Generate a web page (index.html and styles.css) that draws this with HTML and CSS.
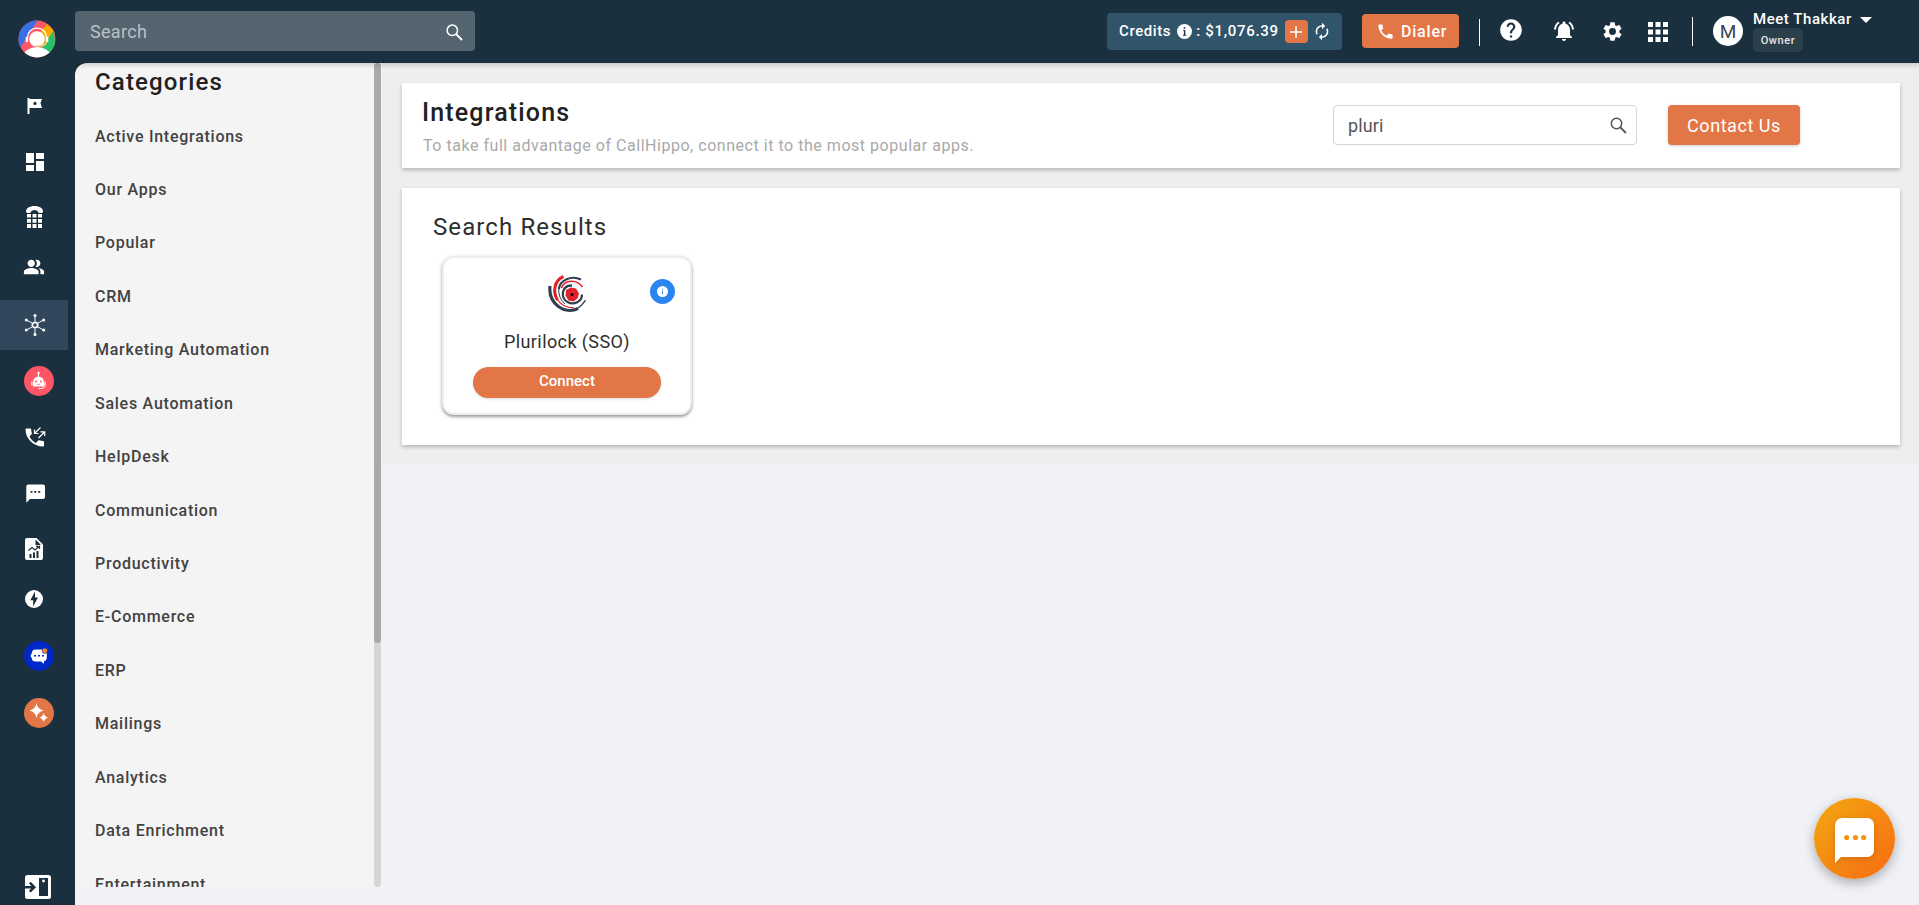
FILE: index.html
```
<!DOCTYPE html>
<html lang="en">
<head>
<meta charset="utf-8">
<title>Integrations</title>
<link rel="stylesheet" href="styles.css">
</head>
<body>
<div class="app">
  <aside class="sidebar">
    <div class="brand">
      <svg width="38" height="38" viewBox="0 0 38 38">
        <defs><clipPath id="disc"><circle cx="19" cy="19" r="18.5"/></clipPath></defs>
        <g clip-path="url(#disc)">
          <rect width="38" height="38" fill="#ff5869"/>
          <path d="M0 0H20L2 28H0Z" fill="#3a6fe8"/>
          <path d="M29 4L38 13L25 29L18 17Z" fill="#ffab00"/>
          <path d="M36 10L22 30L30 38H38Z" fill="#23c36c"/>
          <ellipse cx="19" cy="36.500" rx="13.500" ry="9.500" fill="#fff"/>
          <circle cx="19" cy="19" r="7.800" fill="#fff"/>
          <path d="M9.500 20V17a9.500 8.800 0 0 1 19 0v3" fill="none" stroke="#fff" stroke-width="1.300"/>
          <path d="M8.800 17v5M29.200 17v5" stroke="#fff" stroke-width="2.200"/>
          <path d="M28.500 22q-1 4-7 4h-4" fill="none" stroke="#ffc46b" stroke-width="1.500"/>
        </g>
      </svg>
    </div>
    <nav class="nav">
      <a class="nav-item h46"><svg width="16" height="16" viewBox="0 0 16 16"><path fill="#fff" fill-rule="evenodd" d="M.5 0h2v1H15l-1.500 4L15 10H2.500v6h-2zM8 3.800a1.600 1.600 0 1 0 0 3.200 1.600 1.600 0 0 0 0-3.200z"/></svg></a>
      <a class="nav-item h66"><svg width="24" height="24" viewBox="0 0 24 24"><path fill="#fff" d="M3 13h8V3H3zm0 8h8v-6H3zm10 0h8V11h-8zm0-18v6h8V3z"/></svg></a>
      <a class="nav-item h44 left"><svg width="17" height="22" viewBox="0 0 17 22"><path fill="#fff" d="M8.500 0C3.500 0 0 2.300 0 5.200c0 1.200 1 1.900 2 1.900h2c.800 0 .800-3 4.500-3s3.700 3 4.500 3h2c1 0 2-.700 2-1.900C17 2.300 13.500 0 8.500 0zM1 8h4v3.500H1zm5.500 0h4v3.500h-4zM12 8h4v3.500h-4zM1 13h4v3.700H1zm5.500 0h4v3.700h-4zm5.500 0h4v3.700h-4zM1 18h4v4H1zm5.500 0h4v4h-4zm5.500 0h4v4h-4z"/></svg></a>
      <a class="nav-item h56 left"><svg width="22" height="22" viewBox="0 0 24 24"><path fill="#fff" d="M16.670 13.130C18.040 14.060 19 15.320 19 17v3h4v-3c0-2.180-3.570-3.470-6.330-3.870zM15 12c2.210 0 4-1.790 4-4s-1.790-4-4-4c-.470 0-.910.100-1.330.240a5.980 5.980 0 0 1 0 7.520c.420.140.860.240 1.330.240zM9 12c2.210 0 4-1.790 4-4s-1.790-4-4-4-4 1.790-4 4 1.790 4 4 4zm0 1c-2.670 0-8 1.340-8 4v3h16v-3c0-2.660-5.330-4-8-4z"/></svg></a>
      <a class="nav-item h50 active"><svg width="22" height="22" viewBox="0 0 22 22"><g stroke="#fff" stroke-width="1" fill="none"><path d="M11 1.500v6M11 14.500v6M2.500 6l5.500 3M14 13l5.500 3M2.500 16L8 13M14 9l5.500-3"/><circle cx="11" cy="11" r="2.700" stroke-width="1.700"/></g><g fill="#fff"><circle cx="11" cy="1.600" r="1.500"/><circle cx="11" cy="20.400" r="1.500"/><circle cx="2.300" cy="6" r="1.500"/><circle cx="19.700" cy="6" r="1.500"/><circle cx="2.300" cy="16" r="1.500"/><circle cx="19.700" cy="16" r="1.500"/></g></svg></a>
      <a class="nav-item h62 round"><svg width="30" height="30" viewBox="0 0 30 30"><circle cx="15" cy="15" r="15" fill="#ff5665"/><circle cx="14.500" cy="7" r="1.200" fill="#fff"/><path d="M14.500 7v4" stroke="#fff"/><path d="M9 17q0-6.500 5.500-6.500T20 17v3.500H9zM7.300 15.500h1.200v4H7.300zM20.500 15.500h1.200v4h-1.200z" fill="#fff"/><circle cx="12" cy="15.500" r="1" fill="#ff5665"/><circle cx="17" cy="15.500" r="1" fill="#ff5665"/><path d="M13 18q1.500 1 3 0" stroke="#ff5665" stroke-width=".8" fill="none"/><path d="M21 19.500q0 3-4.500 3h-2" stroke="#fff" fill="none"/></svg></a>
      <a class="nav-item h50"><svg width="21" height="20" viewBox="0 0 21 20"><path fill="#fff" d="M4.500 9.500c1.600 3.100 3.300 4.800 6.400 6.400l2.400-2.400c.300-.300.700-.400 1.100-.2 1.200.4 2.400.6 3.600.6.600 0 1 .4 1 1V18.500c0 .600-.400 1-1 1C8.500 19.500.500 11.500.500 2.500c0-.6.400-1 1-1H5.200c.600 0 1 .4 1 1 0 1.200.2 2.500.6 3.600.1.400 0 .800-.2 1.100z"/><path d="M15.500.500L9.500 6.500M9.500 2.500v4h4M13.500 11l6-6M15.500 4.800h4.200v4.200" fill="none" stroke="#fff" stroke-width="1.200"/></svg></a>
      <a class="nav-item h62"><svg width="19" height="19" viewBox="0 0 19 19"><path fill="#fff" fill-rule="evenodd" d="M2 .5h15a2 2 0 0 1 2 2V13a2 2 0 0 1-2 2H4L.3 18.800V2.500A2 2 0 0 1 2 .5zM4.500 7v1.800h2V7zm3.800 0v1.800h2V7zm3.900 0v1.800h2V7z"/></svg></a>
      <a class="nav-item h50 left"><svg width="18" height="22" viewBox="0 0 18 22"><path fill="#fff" d="M2 0h9.500L18 6.500V20a2 2 0 0 1-2 2H2a2 2 0 0 1-2-2V2a2 2 0 0 1 2-2z"/><path fill="#1b303e" d="M10.500 1.500V7H16zM4.500 16h2v4h-2zM8 14.500h2V20H8zM11.500 13h2v7h-2z"/><path d="M3.500 12.500L7 9.500l3 2.500 4-3.500M11 8.300h3.500V11" fill="none" stroke="#1b303e" stroke-width="1.200"/></svg></a>
      <a class="nav-item h50 left"><svg width="18" height="18" viewBox="0 0 18 18"><circle cx="9" cy="9" r="9" fill="#fff"/><path d="M10 1.500v6h3L8.200 16.500v-6.300H5.300z" fill="#1b303e"/></svg></a>
      <a class="nav-item h64 round"><svg width="30" height="30" viewBox="0 0 30 30"><circle cx="15" cy="15" r="15" fill="#0028c9"/><path d="M11.500 8.500h7q4 0 4.300 4v4q0 3.200-2.800 3.800l-.2 2.500-2.800-2.300h-5.500q-3.500 0-3.700-3.300L6.500 15l1.200-2.500q.3-4 3.800-4z" fill="#fff"/><path d="M10 14h2v1.600h-2zM14 14h2v1.600h-2zM18 14h2v1.600h-2z" fill="#0028c9"/><circle cx="20.800" cy="9.800" r="2.700" fill="#f68b1f" stroke="#0028c9" stroke-width=".6"/></svg></a>
      <a class="nav-item h50 round"><svg width="30" height="30" viewBox="0 0 30 30"><circle cx="15" cy="15" r="15" fill="#e37646"/><path d="M12.500 5q1 6.200 7 7.500-6 1.300-7 7.500-1-6.200-7-7.500 6-1.300 7-7.500zM19.700 15q.7 3.900 4.400 4.700-3.700.8-4.400 4.600-.7-3.800-4.400-4.600 3.700-.8 4.400-4.700z" fill="#fff"/></svg></a>
    </nav>
    <div class="collapse">
      <svg width="26" height="24" viewBox="0 0 26 24"><rect width="26" height="24" rx="2.500" fill="#fff"/><rect x="14" y="3" width="9" height="18" fill="#1b303e"/><circle cx="18.500" cy="6" r="1.400" fill="#fff"/><path d="M0 12.200h8.500M4.800 7.700l4.500 4.500-4.500 4.500" fill="none" stroke="#1b303e" stroke-width="2.500"/></svg>
    </div>
  </aside>

  <div class="page">
    <header class="topbar">
      <div class="search"><span>Search</span>
        <svg width="17" height="17" viewBox="0 0 17 17"><circle cx="6.300" cy="6.300" r="5.200" fill="none" stroke="#fff" stroke-width="1.500"/><path d="M10 10l6 6" stroke="#fff" stroke-width="1.800"/></svg>
      </div>
      <div class="credits">
        <span>Credits</span>
        <svg class="info" width="15" height="15" viewBox="0 0 15 15"><circle cx="7.500" cy="7.500" r="7.500" fill="#fff"/><path d="M6.300 6h2v4.700h1v1H5.900v-1h1V7h-.6zM6.700 3.200h1.600v1.600H6.700z" fill="#1b303e"/></svg>
        <span class="amount">: $1,076.39</span>
        <span class="plus"><svg width="12" height="12" viewBox="0 0 12 12"><path d="M6 0v12M0 6h12" stroke="#fff" stroke-width="1.500"/></svg></span>
        <svg class="sync" width="16" height="19" viewBox="3 0 18 24"><path fill="#fff" d="M12 6v3l4-4-4-4v3c-4.420 0-8 3.580-8 8 0 1.570.460 3.030 1.240 4.260L6.700 14.800A5.870 5.870 0 0 1 6 12c0-3.310 2.690-6 6-6zm6.760 1.740L17.300 9.200c.440.840.700 1.790.700 2.800 0 3.310-2.690 6-6 6v-3l-4 4 4 4v-3c4.420 0 8-3.580 8-8 0-1.570-.460-3.030-1.240-4.260z"/></svg>
      </div>
      <div class="dialer">
        <svg width="19" height="19" viewBox="0 0 24 24"><path fill="#fff" d="M6.620 10.790c1.440 2.830 3.760 5.140 6.590 6.590l2.200-2.200c.270-.270.670-.360 1.020-.240 1.120.370 2.330.570 3.570.570.550 0 1 .450 1 1V20c0 .550-.450 1-1 1-9.390 0-17-7.610-17-17 0-.550.450-1 1-1h3.500c.550 0 1 .450 1 1 0 1.250.200 2.450.570 3.570.110.350.030.740-.250 1.020z"/></svg>
        <span>Dialer</span>
      </div>
      <i class="rule first"></i>
      <svg class="help" width="26" height="26" viewBox="0 0 24 24"><path fill="#fff" d="M12 2C6.480 2 2 6.480 2 12s4.480 10 10 10 10-4.480 10-10S17.520 2 12 2zm1 17h-2v-2h2zm2.070-7.750l-.900.920C13.450 12.900 13 13.500 13 15h-2v-.500c0-1.100.450-2.100 1.170-2.830l1.240-1.260c.370-.360.590-.860.590-1.410 0-1.100-.900-2-2-2s-2 .900-2 2H8c0-2.210 1.790-4 4-4s4 1.790 4 4c0 .880-.360 1.680-.930 2.250z"/></svg>
      <svg class="bell" width="24" height="24" viewBox="0 0 24 24"><path fill="#fff" d="M7.580 4.080L6.150 2.650C3.750 4.480 2.170 7.300 2.030 10.500h2a8.445 8.445 0 0 1 3.550-6.420zM19.970 10.500h2c-.150-3.200-1.730-6.020-4.120-7.850l-1.420 1.430a8.495 8.495 0 0 1 3.540 6.420zM18 11c0-3.070-1.640-5.640-4.500-6.320V4c0-.830-.670-1.500-1.500-1.500s-1.500.670-1.500 1.500v.680C7.630 5.360 6 7.920 6 11v5l-2 2v1h16v-1l-2-2zm-6 11c.140 0 .270-.010.400-.040a2.030 2.030 0 0 0 1.440-1.180c.100-.240.150-.500.150-.780h-4c.010 1.100.900 2 2.010 2z"/></svg>
      <svg class="gear" width="23" height="23" viewBox="0 0 24 24"><path fill="#fff" d="M19.140 12.940c.040-.300.060-.610.060-.940 0-.320-.020-.640-.070-.940l2.030-1.580a.490.490 0 0 0 .120-.610l-1.920-3.320a.488.488 0 0 0-.590-.220l-2.390.960c-.500-.380-1.030-.700-1.620-.940l-.360-2.540a.484.484 0 0 0-.480-.410h-3.840c-.240 0-.430.170-.470.410l-.360 2.540c-.590.240-1.130.570-1.620.940l-2.390-.960c-.220-.080-.470 0-.590.220L2.740 8.870c-.120.210-.080.470.120.610l2.030 1.580c-.050.300-.090.630-.090.940s.020.640.070.940l-2.030 1.580a.490.490 0 0 0-.120.610l1.920 3.320c.120.220.370.290.590.220l2.390-.960c.500.380 1.030.700 1.620.940l.360 2.540c.050.240.240.410.480.410h3.840c.240 0 .440-.170.470-.410l.360-2.540c.590-.240 1.130-.560 1.620-.940l2.390.960c.220.080.470 0 .590-.220l1.920-3.320c.120-.220.070-.470-.120-.610zM12 15.600A3.600 3.600 0 1 1 12 8.400a3.600 3.600 0 0 1 0 7.200z"/></svg>
      <svg class="apps" width="20" height="20" viewBox="0 0 20 20"><path fill="#fff" d="M0 0h5v5H0zM7.500 0h5v5h-5zM15 0h5v5h-5zM0 7.500h5v5H0zM7.500 7.500h5v5h-5zM15 7.500h5v5h-5zM0 15h5v5H0zM7.500 15h5v5h-5zM15 15h5v5h-5z"/></svg>
      <i class="rule second"></i>
      <div class="avatar">M</div>
      <div class="user">
        <div class="name"><span>Meet Thakkar</span><i class="caret"></i></div>
        <div class="role">Owner</div>
      </div>
    </header>

    <div class="body">
      <section class="categories">
        <div class="list">
          <h2>Categories</h2>
          <ul>
            <li>Active Integrations</li><li>Our Apps</li><li>Popular</li><li>CRM</li>
            <li>Marketing Automation</li><li>Sales Automation</li><li>HelpDesk</li>
            <li>Communication</li><li>Productivity</li><li>E-Commerce</li><li>ERP</li>
            <li>Mailings</li><li>Analytics</li><li>Data Enrichment</li><li>Entertainment</li>
          </ul>
        </div>
        <div class="track"><div class="thumb"></div></div>
      </section>
      <main class="main">
        <section class="card head">
          <div class="titles">
            <h1>Integrations</h1>
            <p>To take full advantage of CallHippo, connect it to the most popular apps.</p>
          </div>
          <div class="filter"><span>pluri</span>
            <svg width="17" height="17" viewBox="0 0 17 17"><circle cx="6.500" cy="6.500" r="5.200" fill="none" stroke="#555" stroke-width="1.500"/><path d="M10.300 10.300l5.700 5.700" stroke="#555" stroke-width="1.900"/></svg>
          </div>
          <button class="contact">Contact Us</button>
        </section>
        <section class="card results">
          <h3>Search Results</h3>
          <article class="tile">
            <svg class="tile-logo" width="38" height="37" viewBox="0 0 38 37">
              <g fill="none">
                <path d="M2 11C0 29 17 40 30 33.500" stroke="#313f50" stroke-width="3.200"/>
                <path d="M28 34Q34 31 37.500 25" stroke="#313f50" stroke-width="1.300"/>
                <path d="M15.500 1.500C6 5.500 4.500 17 9.500 25" stroke="#e22028" stroke-width="3"/>
                <path d="M9 24Q14.500 33 26 32.800" stroke="#e22028" stroke-width="1.200"/>
                <path d="M33 4.500C23 0 12 5 10.800 14" stroke="#313f50" stroke-width="2.200"/>
                <path d="M10.800 13Q10 23 17 29" stroke="#313f50" stroke-width="1"/>
                <path d="M34.500 12C29 4.500 17 4 13.500 13" stroke="#e22028" stroke-width="1.600"/>
                <path d="M24 10.500C13.500 10 12 23 19.500 27 26 30.500 34 26.500 34 19.500" stroke="#313f50" stroke-width="2.300"/>
              </g>
              <path d="M18 15l5-2.500 5 1 3 5-1.500 5-4 3-5-1-3-5z" fill="#e22028"/><circle cx="24" cy="19.500" r="1.500" fill="#000"/>
            </svg>
            <span class="tile-info"><svg width="11" height="11" viewBox="0 0 12 12"><circle cx="6" cy="6" r="6" fill="#fff"/><path d="M5.500 5.200h1v3.600h-1zM5.500 3h1v1.200h-1z" fill="#2a86ee"/></svg></span>
            <h4>Plurilock (SSO)</h4>
            <button class="connect">Connect</button>
          </article>
        </section>
      </main>
    </div>
  </div>
</div>
<button class="chat">
  <svg width="40" height="46" viewBox="0 0 40 46"><path d="M7 0h25.500a6.500 6.500 0 0 1 6.500 6.500v26a6.500 6.500 0 0 1-6.500 6.500H6L0 45V7a7 7 0 0 1 7-7z" fill="#fff"/><g fill="#f2940f"><circle cx="11.700" cy="19.500" r="2.600"/><circle cx="20.500" cy="19.500" r="2.600"/><circle cx="28.700" cy="19.500" r="2.600"/></g></svg>
</button>
</body>
</html>
```
FILE: styles.css
```
* { box-sizing: border-box; }
html, body { margin: 0; height: 100%; overflow: hidden; }
body { font-family: Roboto, sans-serif; background: #f1f2f7; color: #212121; }
h1, h2, h3, h4, p, ul { margin: 0; padding: 0; }
svg { display: block; flex: none; }
button { border: 0; font-family: inherit; }

.app { display: flex; height: 100vh; }

.sidebar { width: 75px; flex: none; background: #1b303e; display: flex; flex-direction: column; position: relative; z-index: 2; }
.brand { padding: 20px 0 0 18px; height: 83px; flex: none; }
.nav { display: flex; flex-direction: column; }
.nav-item { width: 68px; display: flex; align-items: center; justify-content: center; padding-left: 2px; }
.nav-item.left { padding-left: 0; }
.nav-item.round { padding-left: 10px; }
.nav-item.active { background: #33475c; margin-top: 5px; }
.h44 { height: 44px; }
.h46 { height: 46px; }
.h50 { height: 50px; }
.h56 { height: 56px; }
.h62 { height: 62px; }
.h64 { height: 64px; }
.h66 { height: 66px; }
.collapse { margin-top: auto; padding: 0 0 6px 25px; }

.page { flex: 1; min-width: 0; display: flex; flex-direction: column; }
.topbar { height: 63px; flex: none; background: #1b303e; display: flex; align-items: flex-start; color: #fff; box-shadow: 0 2px 5px rgba(0, 0, 0, .18); position: relative; z-index: 1; }
.search { width: 400px; height: 40px; margin-top: 11px; border-radius: 4px; background: #54656f; display: flex; align-items: center; justify-content: space-between; padding: 0 12px 0 15px; color: #bcc1c4; font-size: 18px; letter-spacing: .3px; }
.search svg { margin-top: 2px; }
.credits { width: 235px; height: 37px; margin: 13px 0 0 632px; border-radius: 4px; background: #30556b; display: flex; align-items: center; padding-left: 12px; font-size: 15px; font-weight: 500; letter-spacing: .6px; line-height: 35px; white-space: nowrap; }
.credits span { margin-top: -1px; }
.info { margin-left: 6px; }
.amount { margin-left: 4px; letter-spacing: .7px; }
.credits .plus { width: 23px; height: 23px; margin: 0 0 0 6px; border-radius: 4px; background: #e37646; display: flex; align-items: center; justify-content: center; }
.sync { margin-left: 6px; }
.dialer { width: 97px; height: 34px; margin: 14px 0 0 20px; border-radius: 4px; background: #e37646; display: flex; align-items: center; padding-left: 14px; gap: 6px; font-size: 16px; font-weight: 500; letter-spacing: .8px; }
.rule { width: 1px; background: #fff; }
.rule.first { height: 27px; margin: 19px 0 0 20px; }
.rule.second { height: 29px; margin: 17px 0 0 24px; }
.help { margin: 17px 0 0 18px; }
.bell { margin: 19px 0 0 28px; }
.gear { margin: 20px 0 0 25px; }
.apps { margin: 22px 0 0 24px; }
.avatar { width: 30px; height: 30px; margin: 16px 0 0 20px; border-radius: 50%; background: #fff; color: #3a4558; font-size: 19px; line-height: 31px; text-align: center; }
.user { margin: 9px 0 0 10px; }
.name { display: flex; align-items: center; height: 19px; font-size: 15px; font-weight: 500; letter-spacing: .55px; white-space: nowrap; }
.caret { margin-left: 8px; border: 6.5px solid transparent; border-top-color: #fff; border-bottom: 0; margin-top: 2px; }
.role { width: 50px; height: 24px; border-radius: 5px; background: #2c404c; font-size: 11px; font-weight: 500; letter-spacing: .6px; line-height: 25px; text-align: center; color: #e4e7e9; }

.body { flex: 1; display: flex; align-items: flex-start; background: linear-gradient(#1b303e 16px, transparent 16px); min-height: 0; }
.categories { width: 307px; height: 824px; flex: none; display: flex; background: #f4f4f4; border-top-left-radius: 12px; overflow: hidden; }
.list { flex: 1; padding-left: 20px; }
.list h2 { font-size: 24px; font-weight: 500; letter-spacing: 1.15px; line-height: 30px; margin-top: 4px; }
.list ul { list-style: none; padding-top: 12.500px; }
.list li { height: 53.450px; line-height: 53.450px; font-size: 16px; font-weight: 500; letter-spacing: .74px; color: #424242; }
.track { width: 7px; margin-right: 1px; border-radius: 4px; background: #d6d6d6; }
.thumb { height: 580px; border-radius: 4px; background: #a9a9a9; }

.main { flex: 1; height: 402px; padding: 20px 19px 0 20px; background: #eee; display: flex; flex-direction: column; gap: 20px; }
.card { background: #fff; box-shadow: 0 2px 4px rgba(0, 0, 0, .24); }
.head { height: 85px; display: flex; align-items: flex-start; padding: 0 100px 0 21px; }
.titles { flex: 1; }
.titles h1 { font-size: 25px; font-weight: 500; letter-spacing: 1.15px; line-height: 30px; margin: 15px 0 0 -1px; }
.titles p { font-size: 16px; letter-spacing: .53px; line-height: 20px; margin-top: 8px; color: #a9a9a9; }
.filter { width: 304px; height: 40px; margin: 22px 31px 0 0; border: 1px solid #d5d5d5; border-radius: 4px; display: flex; align-items: center; justify-content: space-between; padding: 0 9px 0 14px; font-size: 18px; letter-spacing: .1px; color: #555; }
.contact { width: 132px; height: 40px; margin-top: 22px; border-radius: 4px; background: #e37646; color: #fff; font-size: 18px; font-weight: 400; letter-spacing: .55px; padding: 0; box-shadow: 0 1px 3px rgba(0, 0, 0, .2); }
.results { height: 257px; padding: 23px 0 0 31px; }
.results h3 { font-size: 24px; font-weight: 400; letter-spacing: 1.1px; line-height: 32px; color: #2e2e2e; }
.tile { width: 250px; height: 159px; margin: 13px 0 0 9px; border: 2px solid #eee; border-radius: 12px; background: #fff; box-shadow: 0 2px 3px rgba(0, 0, 0, .36), 0 0 4px rgba(0, 0, 0, .08); position: relative; display: flex; flex-direction: column; align-items: center; padding-top: 17px; }
.tile-info { position: absolute; top: 21px; right: 15px; width: 25px; height: 25px; border-radius: 50%; background: #2a86ee; display: flex; align-items: center; justify-content: center; }
.tile h4 { font-size: 18px; font-weight: 400; letter-spacing: .4px; line-height: 24px; margin-top: 18px; color: #2e2e2e; }
.connect { width: 188px; height: 31px; margin-top: 13px; border-radius: 16px; background: #e37646; color: #fff; font-size: 15px; font-weight: 500; line-height: 29px; padding: 0 0 2px; box-shadow: 0 1px 3px rgba(0, 0, 0, .15); }

.chat { position: absolute; right: 24px; bottom: 26px; width: 81px; height: 81px; border-radius: 50%; background: linear-gradient(135deg, #f2a912, #f76b12); box-shadow: 0 4px 12px rgba(0, 0, 0, .3); display: flex; align-items: center; justify-content: center; padding: 4px 0 0 0; }
.chat svg { filter: drop-shadow(0 2px 3px rgba(120, 50, 0, .25)); }
```
